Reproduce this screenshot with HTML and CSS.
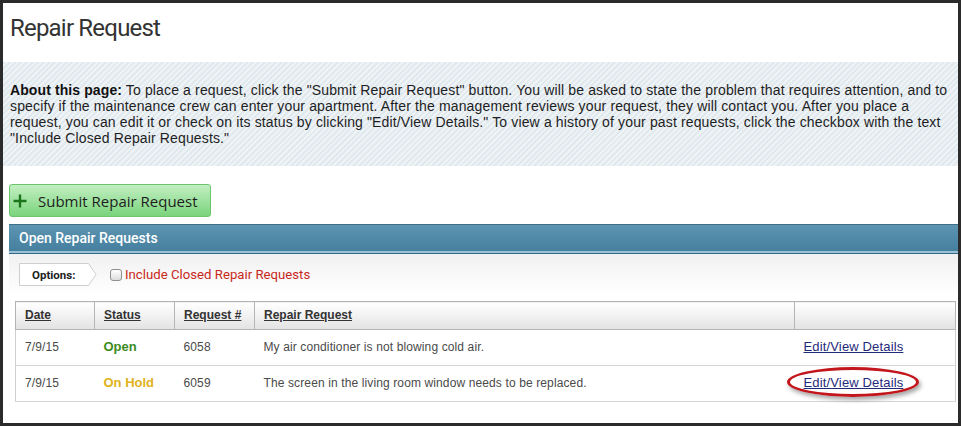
FILE: index.html
```html
<!DOCTYPE html>
<html>
<head>
<meta charset="utf-8">
<link rel="stylesheet" href="styles.css">
</head>
<body>
<div class="frame">
  <h1 class="title">Repair Request</h1>
  <div class="about">
    <p><b>About this page:</b> To place a request, click the "Submit Repair Request" button. You will be asked to state the problem that requires attention, and to specify if the maintenance crew can enter your apartment. After the management reviews your request, they will contact you. After you place a request, you can edit it or check on its status by clicking "Edit/View Details." To view a history of your past requests, click the checkbox with the text "Include Closed Repair Requests."</p>
  </div>
  <div class="actions">
    <button class="btn-submit" type="button">
      <svg class="plus" width="14" height="14" viewBox="0 0 14 14"><path d="M7 0.5v13M0.5 7h13" stroke="#1b761b" stroke-width="2.4" fill="none"/></svg>
      <span>Submit Repair Request</span>
    </button>
  </div>
  <div class="panel">
    <div class="panel-head">Open Repair Requests</div>
    <div class="options">
      <span class="opt-label">
        <svg class="opt-shape" width="78" height="23" viewBox="0 0 78 23"><path d="M0.5 0.5H69.5L77 11.5L69.5 22.5H0.5Z" fill="#fff" stroke="#cfcfcf"/></svg>
        <span class="opt-text">Options:</span>
      </span>
      <span class="check"></span>
      <span class="check-label">Include Closed Repair Requests</span>
    </div>
    <table class="grid">
      <thead>
        <tr>
          <th class="c-date"><span>Date</span></th>
          <th class="c-status"><span>Status</span></th>
          <th class="c-num"><span>Request #</span></th>
          <th class="c-desc"><span>Repair Request</span></th>
          <th class="c-act"></th>
        </tr>
      </thead>
      <tbody>
        <tr>
          <td>7/9/15</td>
          <td class="st-open">Open</td>
          <td>6058</td>
          <td>My air conditioner is not blowing cold air.</td>
          <td><a class="link" href="#">Edit/View Details</a></td>
        </tr>
        <tr>
          <td>7/9/15</td>
          <td class="st-hold">On Hold</td>
          <td>6059</td>
          <td>The screen in the living room window needs to be replaced.</td>
          <td><span class="circled"><a class="link" href="#">Edit/View Details</a><span class="ring"></span></span></td>
        </tr>
      </tbody>
    </table>
  </div>
</div>
</body>
</html>
```

FILE: styles.css
```css
* { box-sizing: border-box; }
html, body { margin: 0; padding: 0; background: #fff; }
body { font-family: "Liberation Sans", Arial, sans-serif; }

.frame {
  width: 961px;
  height: 426px;
  border: 3px solid #2b2b2b;
  background: #fff;
  overflow: hidden;
}

.title {
  margin: 0;
  height: 59px;
  padding: 11px 0 0 7px;
  font-family: Roboto, "Liberation Sans", sans-serif;
  font-weight: 400;
  font-size: 24px;
  letter-spacing: -0.8px;
  line-height: 28px;
  color: #333;
}

.about {
  height: 104px;
  padding: 20px 4px 0 7px;
  background: repeating-linear-gradient(135deg, #e2e9ee 0 2px, #eef3f6 2px 4px);
}
.about p {
  margin: 0;
  font-size: 14px;
  letter-spacing: 0.14px;
  line-height: 16px;
  color: #1e1e1e;
}
.about b { color: #111; letter-spacing: 0.1px; }

.actions {
  padding: 18px 0 0 6px;
  height: 58px;
}
.btn-submit {
  display: flex;
  align-items: center;
  gap: 11px;
  width: 202px;
  height: 33px;
  padding: 0 0 0 3px;
  border: 1px solid #6cc46c;
  border-radius: 3px;
  background: linear-gradient(#c2efc2, #7ad47c);
  font-family: "Open Sans", sans-serif;
  font-size: 15px;
  color: #1d1d1d;
}
.plus { flex: none; }

.panel { margin-left: 6px; }
.panel-head {
  height: 30px;
  padding: 0 0 0 10px;
  border-top: 1px solid #3f6e87;
  border-bottom: 1px solid #326a88;
  box-shadow: inset 0 -2px 0 #9cc0d6;
  background: linear-gradient(#5c94b1, #447e9e);
  font-family: Roboto, sans-serif;
  font-weight: 500;
  font-size: 14px;
  line-height: 27px;
  color: #fff;
}

.options {
  display: flex;
  align-items: center;
  height: 41px;
  padding: 0 0 0 10px;
  background: linear-gradient(#f1f1f1, #fff);
}
.opt-label {
  position: relative;
  width: 78px;
  height: 23px;
  display: flex;
  align-items: center;
}
.opt-shape { position: absolute; left: 0; top: 0; }
.opt-text {
  position: relative;
  padding-left: 13px;
  font-family: Roboto, sans-serif;
  font-weight: 700;
  font-size: 11.5px;
  color: #222;
}
.check {
  width: 12px;
  height: 12px;
  margin-left: 13px;
  border: 1px solid #8f8f8f;
  border-radius: 3px;
  background: linear-gradient(#fff, #dcdcdc);
}
.check-label {
  margin-left: 3px;
  font-family: Roboto, sans-serif;
  font-size: 13.2px;
  color: #c8281c;
}

.grid {
  margin: 6px 0 0 6px;
  width: 941px;
  border-collapse: collapse;
  border: 1px solid #cfcfcf;
  font-size: 12px;
}
.grid th {
  height: 28px;
  padding: 0 0 1px 9px;
  text-align: left;
  font-weight: 700;
  color: #333;
  background: linear-gradient(#fff, #e3e3e3);
  border: 1px solid #b4b4b4;
}
.grid th span { text-decoration: underline; }
.c-date { width: 79px; }
.c-status { width: 80px; }
.c-num { width: 80px; }
.c-desc { width: 540px; }
.grid td {
  height: 36px;
  padding: 0 0 2px 9px;
  color: #4a4a4a;
  border-bottom: 1px solid #d6d6d6;
  font-size: 12px;
  letter-spacing: 0.12px;
}
.grid td.st-open { color: #3d8b1e; font-weight: 700; font-size: 13px; letter-spacing: 0; }
.grid td.st-hold { color: #e0b21c; font-weight: 700; font-size: 13px; letter-spacing: 0; }

.link {
  color: #1f2a7a;
  text-decoration: underline;
  font-size: 13px;
  letter-spacing: 0.15px;
}
.circled {
  position: relative;
  display: inline-block;
}
.ring {
  position: absolute;
  left: -17px;
  top: -8px;
  width: 132px;
  height: 30px;
  border: 3px solid #c3161c;
  border-radius: 50%;
  box-shadow: 2px 3px 4px rgba(0,0,0,0.35);
  pointer-events: none;
}
```
